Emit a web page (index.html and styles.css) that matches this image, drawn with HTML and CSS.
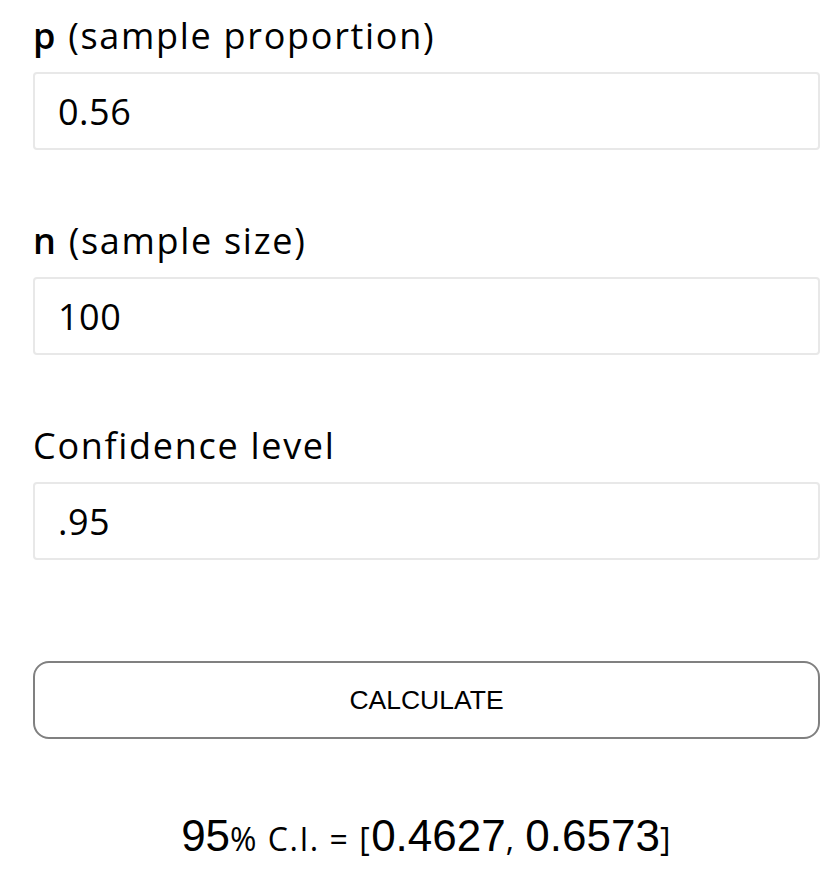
FILE: index.html
```html
<!DOCTYPE html>
<html lang="en">
<head>
  <meta charset="UTF-8" />
  <meta name="viewport" content="width=device-width,initial-scale=1.0" />
  <title>Confidence interval for a proportion</title>
  <link rel="stylesheet" href="styles.css">
</head>
<body>
  <div class="calc">
    <div class="field">
      <label for="pInput"><b>p</b> (sample proportion)</label>
      <input type="text" id="pInput" value="0.56" />
    </div>
    <div class="field">
      <label for="nInput"><b>n</b> (sample size)</label>
      <input type="text" id="nInput" value="100" />
    </div>
    <div class="field">
      <label for="confInput">Confidence level</label>
      <input type="text" id="confInput" value=".95" />
    </div>

    <button id="calcBtn">CALCULATE</button>

    <div id="result">
      <span class="num">95</span>% C.I. = [<span class="num">0.4627</span>, <span class="num">0.6573</span>]
    </div>
  </div>
</body>
</html>
```

FILE: styles.css
```css
* { box-sizing: border-box; margin: 0; padding: 0; }
html, body {
  background: #fff;
  font-family: "Open Sans", Lato, sans-serif;
  color: #000;
}
.calc {
  padding: 12px 14px 0 33px;
  display: flex;
  flex-direction: column;
}
.field { margin-bottom: 67px; }
.field label {
  display: block;
  font-size: 36px;
  line-height: 48px;
  margin-bottom: 12px;
  letter-spacing: 1.7px;
}
.field label b { font-weight: 600; }
.field input {
  width: 100%;
  height: 78px;
  padding: 0 23px;
  font-family: "Open Sans", Lato, sans-serif;
  font-size: 36px;
  letter-spacing: 0.5px;
  color: #000;
  border: 2px solid #e8e8e8;
  border-radius: 4px;
  outline: none;
}
#calcBtn {
  margin-top: 34px;
  height: 78px;
  background: #fff;
  border: 2px solid #808080;
  border-radius: 16px;
  font-family: "Liberation Sans", Arial, sans-serif;
  font-size: 26.5px;
  color: #000;
  cursor: pointer;
}
#result {
  margin-top: 72px;
  text-align: center;
  font-size: 32px;
  letter-spacing: 1.5px;
}
#result .num {
  font-family: "Liberation Sans", Arial, sans-serif;
  font-size: 44px;
  letter-spacing: 0;
}
```
